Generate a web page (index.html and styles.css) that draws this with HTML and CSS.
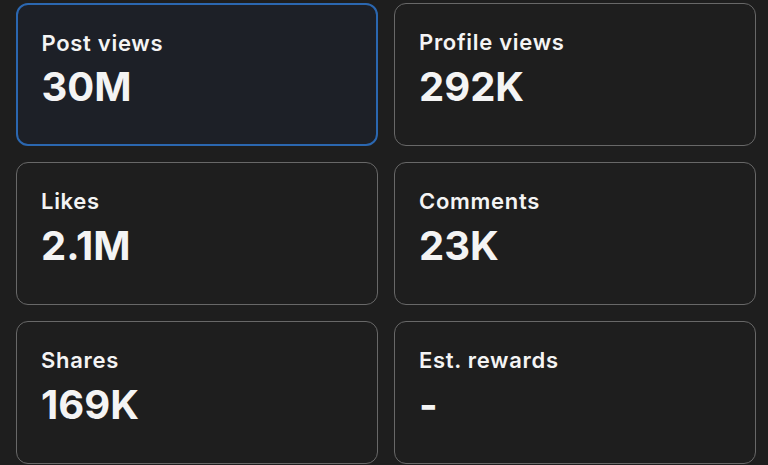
FILE: index.html
```html
<!DOCTYPE html>
<html>
    <head>
        <title>Analytics</title>
        <link rel="stylesheet" href="styles.css">
    </head>
    <body>
        <div class="stats">
            <div class="card active">
                <div class="label">Post views</div>
                <div class="value">30M</div>
            </div>
            <div class="card">
                <div class="label">Profile views</div>
                <div class="value">292K</div>
            </div>
            <div class="card">
                <div class="label">Likes</div>
                <div class="value">2.1M</div>
            </div>
            <div class="card">
                <div class="label">Comments</div>
                <div class="value">23K</div>
            </div>
            <div class="card">
                <div class="label">Shares</div>
                <div class="value">169K</div>
            </div>
            <div class="card">
                <div class="label">Est. rewards</div>
                <div class="value">-</div>
            </div>
        </div>
    </body>
</html>
```
FILE: styles.css
```css
body {
    margin: 0;
    background-color: #1e1e1e;
    font-family: Inter, Roboto, "Liberation Sans", sans-serif;
    color: #f4f4f4;
    height: 465px;
    overflow: hidden;
}
.stats {
    display: grid;
    grid-template-columns: 362px 362px;
    grid-auto-rows: 143px;
    column-gap: 16px;
    row-gap: 16px;
    padding: 3px 0 0 16px;
}
.card {
    box-sizing: border-box;
    border: 1.5px solid #686868;
    border-radius: 12px;
    padding: 24px 24px;
    background-color: #1e1e1e;
}
.card.active {
    border: 2px solid #2b67b0;
    padding: 23.5px;
    background-color: #1d2027;
}
.label {
    font-size: 22px;
    font-weight: 600;
    line-height: 28px;
    letter-spacing: 0.7px;
}
.value {
    font-size: 40px;
    font-weight: 700;
    line-height: 48px;
    margin-top: 6.5px;
}
```
